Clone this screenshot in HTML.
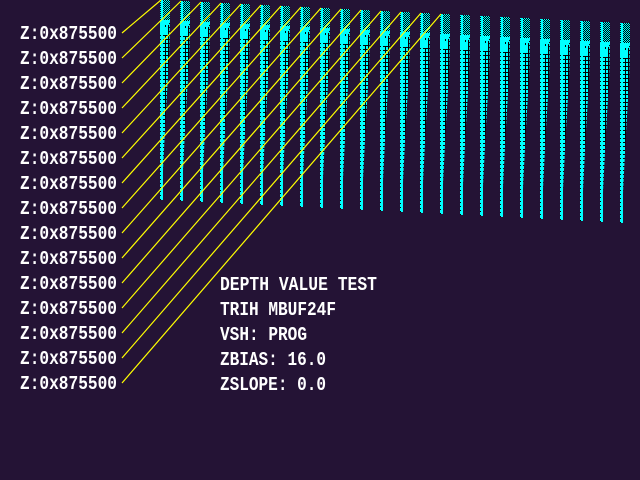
<!DOCTYPE html>
<html><head><meta charset="utf-8"><style>
html,body{margin:0;padding:0;background:#241335;width:640px;height:480px;overflow:hidden}
svg{display:block}
text{font-family:"Liberation Mono",monospace;font-weight:bold;fill:#fff;font-size:19px}
</style></head><body>
<svg width="640" height="480" viewBox="0 0 640 480" xmlns="http://www.w3.org/2000/svg">
<defs>
<pattern id="chk" width="2" height="2" patternUnits="userSpaceOnUse">
<rect width="2" height="2" fill="#000"/><rect width="1" height="1" fill="#0ff"/><rect x="1" y="1" width="1" height="1" fill="#0ff"/>
</pattern>
<pattern id="str" width="3" height="4" patternUnits="userSpaceOnUse">
<rect width="3" height="4" fill="#000"/><rect width="2" height="3" fill="#0ff"/>
</pattern>
<g id="col">
<rect x="0" y="0" width="10" height="20" fill="url(#chk)"/>
<polygon points="0,20 10,20 9,60 6,110 3,170 2,200 0,200" fill="url(#str)"/>
<rect x="0" y="20" width="9" height="5" fill="#0ff"/>
<rect x="0" y="27" width="8" height="8" fill="#0ff"/>
<rect x="1" y="0" width="2" height="200" fill="#0ff"/>
</g>
</defs>
<rect width="640" height="480" fill="#241335"/>
<use href="#col" x="160" y="0"/><use href="#col" x="180" y="1"/><use href="#col" x="200" y="2"/><use href="#col" x="220" y="3"/>
<use href="#col" x="240" y="4"/><use href="#col" x="260" y="5"/><use href="#col" x="280" y="6"/><use href="#col" x="300" y="7"/>
<use href="#col" x="320" y="8"/><use href="#col" x="340" y="9"/><use href="#col" x="360" y="10"/><use href="#col" x="380" y="11"/>
<use href="#col" x="400" y="12"/><use href="#col" x="420" y="13"/><use href="#col" x="440" y="14"/><use href="#col" x="460" y="15"/>
<use href="#col" x="480" y="16"/><use href="#col" x="500" y="17"/><use href="#col" x="520" y="18"/><use href="#col" x="540" y="19"/>
<use href="#col" x="560" y="20"/><use href="#col" x="580" y="21"/><use href="#col" x="600" y="22"/><use href="#col" x="620" y="23"/>
<g stroke="#ff0" stroke-width="1.2">
<line x1="122" y1="33" x2="161" y2="0"/>
<line x1="122" y1="58" x2="181" y2="1"/>
<line x1="122" y1="83" x2="201" y2="2"/>
<line x1="122" y1="108" x2="221" y2="3"/>
<line x1="122" y1="133" x2="241" y2="4"/>
<line x1="122" y1="158" x2="261" y2="5"/>
<line x1="122" y1="183" x2="281" y2="6"/>
<line x1="122" y1="208" x2="301" y2="7"/>
<line x1="122" y1="233" x2="321" y2="8"/>
<line x1="122" y1="258" x2="341" y2="9"/>
<line x1="122" y1="283" x2="361" y2="10"/>
<line x1="122" y1="308" x2="381" y2="11"/>
<line x1="122" y1="333" x2="401" y2="12"/>
<line x1="122" y1="358" x2="421" y2="13"/>
<line x1="122" y1="383" x2="441" y2="14"/>
</g>
<g>
<text x="20" y="39" textLength="97" lengthAdjust="spacingAndGlyphs">Z:0x875500</text>
<text x="20" y="64" textLength="97" lengthAdjust="spacingAndGlyphs">Z:0x875500</text>
<text x="20" y="89" textLength="97" lengthAdjust="spacingAndGlyphs">Z:0x875500</text>
<text x="20" y="114" textLength="97" lengthAdjust="spacingAndGlyphs">Z:0x875500</text>
<text x="20" y="139" textLength="97" lengthAdjust="spacingAndGlyphs">Z:0x875500</text>
<text x="20" y="164" textLength="97" lengthAdjust="spacingAndGlyphs">Z:0x875500</text>
<text x="20" y="189" textLength="97" lengthAdjust="spacingAndGlyphs">Z:0x875500</text>
<text x="20" y="214" textLength="97" lengthAdjust="spacingAndGlyphs">Z:0x875500</text>
<text x="20" y="239" textLength="97" lengthAdjust="spacingAndGlyphs">Z:0x875500</text>
<text x="20" y="264" textLength="97" lengthAdjust="spacingAndGlyphs">Z:0x875500</text>
<text x="20" y="289" textLength="97" lengthAdjust="spacingAndGlyphs">Z:0x875500</text>
<text x="20" y="314" textLength="97" lengthAdjust="spacingAndGlyphs">Z:0x875500</text>
<text x="20" y="339" textLength="97" lengthAdjust="spacingAndGlyphs">Z:0x875500</text>
<text x="20" y="364" textLength="97" lengthAdjust="spacingAndGlyphs">Z:0x875500</text>
<text x="20" y="389" textLength="97" lengthAdjust="spacingAndGlyphs">Z:0x875500</text>
</g>
<g>
<text x="220" y="290" textLength="157" lengthAdjust="spacingAndGlyphs">DEPTH VALUE TEST</text>
<text x="220" y="315" textLength="116" lengthAdjust="spacingAndGlyphs">TRIH MBUF24F</text>
<text x="220" y="340" textLength="87" lengthAdjust="spacingAndGlyphs">VSH: PROG</text>
<text x="220" y="365" textLength="106" lengthAdjust="spacingAndGlyphs">ZBIAS: 16.0</text>
<text x="220" y="390" textLength="106" lengthAdjust="spacingAndGlyphs">ZSLOPE: 0.0</text>
</g>
</svg>
</body></html>
